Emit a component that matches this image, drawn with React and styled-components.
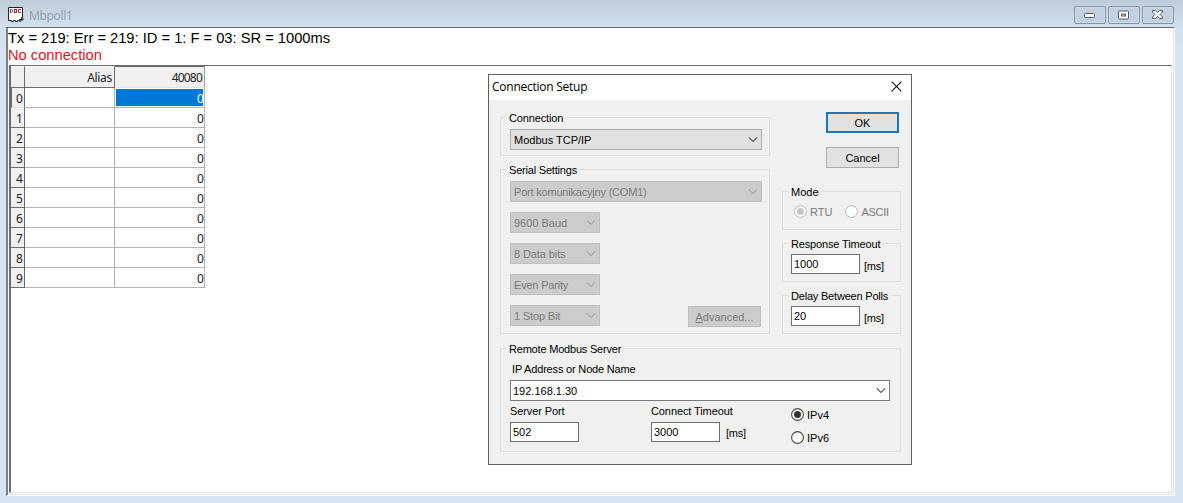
import React from 'react';
import styled, { createGlobalStyle } from 'styled-components';

const GlobalStyle = createGlobalStyle`
    * {
        box-sizing: border-box;
    }

    body {
        margin: 0;
        overflow: hidden;
        background: #d7e4f2;
    }
`;

const Window = styled.div`
    position: relative;
    display: flex;
    flex-direction: column;
    width: 1183px;
    height: 503px;
    padding: 0 8px 7px 6px;
    background: linear-gradient(#bfcddb 0, #d2dfec 27px, #d7e4f2 60px);
    color: #000;
`;

const TitleBar = styled.header`
    display: flex;
    flex: none;
    align-items: flex-start;
    height: 27px;
    padding: 6px 0 0 2px;

    > svg {
        margin-top: 1px;
    }
`;

const WindowTitle = styled.h1`
    flex: 1;
    margin: 2px 0 0 5px;
    font: 12px/16px "Open Sans", sans-serif;
    letter-spacing: -0.3px;
    color: #929ba5;
`;

const WindowButtons = styled.div`
    display: flex;
    gap: 2px;
    margin-right: 1px;
`;

const WindowButton = styled.button`
    display: flex;
    align-items: center;
    justify-content: center;
    width: 32px;
    height: 18px;
    padding: 0;
    border: 1px solid #8593a8;
    border-radius: 2px;
    background: #c3d0df;
    box-shadow: inset 0 0 0 1px #d0dbe8;
`;

const Client = styled.main`
    display: flex;
    flex: 1;
    flex-direction: column;
    padding: 2px 1px 1px 0;
    border: 1px solid;
    border-color: #6b6b6b #fff #fff #808080;
    border-left-width: 2px;
    background: #fff;
    box-shadow: inset -1px -1px #e3e3e3;
`;

const StatusLine = styled.p`
    margin: 0;
    font: 14.7px/17px "Liberation Sans", Arial, sans-serif;
    white-space: nowrap;
    color: ${props => (props.$error ? '#e0141e' : '#000')};
`;

const Sheet = styled.section`
    flex: 1;
    margin: 1px 1px 1px 1px;
    border: 1px solid;
    border-color: #6b6b6b #e3e3e3 #e3e3e3 #6b6b6b;
    border-left-width: 2px;
`;

const Grid = styled.div`
    display: grid;
    grid-template-columns: 14px 90px 90px;
    grid-template-rows: 22px;
    grid-auto-rows: 20px;
    width: 194px;
    font: 12px/20px "Noto Sans", sans-serif;
    letter-spacing: -0.8px;
    text-align: right;
    color: #222;
`;

const HeadCell = styled.div`
    padding: 0 2px 0 0;
    border-right: 1px solid ${props => (props.$active ? '#a0a0a0' : '#696969')};
    border-bottom: 1px solid ${props => (props.$active ? '#e3e3e3' : '#696969')};
    border-top: 1px solid ${props => (props.$active ? '#696969' : '#fff')};
    background: #f0f0f0;
    line-height: 21px;
    letter-spacing: ${props => props.$spacing || -0.8}px;
`;

const RowHead = styled.div`
    padding: 2px 2px 0 0;
    border-right: 1px solid #696969;
    border-bottom: 1px solid ${props => (props.$active ? '#e3e3e3' : '#696969')};
    border-left: ${props => (props.$active ? '1px solid #696969' : '0')};
    background: #f0f0f0;
    line-height: 18px;
`;

const Cell = styled.div`
    padding: 1px;
    border-right: 1px solid #b4b4b4;
    border-bottom: 1px solid #b4b4b4;

    span {
        display: block;
        height: 17px;
        line-height: 19px;
        color: ${props => (props.$selected ? '#fff' : '#222')};
        background: ${props => (props.$selected ? '#0078d7' : 'none')};
    }
`;

const Dialog = styled.div`
    position: absolute;
    top: 74px;
    left: 488px;
    width: 424px;
    height: 391px;
    border: 1px solid #5f5f5f;
    background: #f0f0f0;
    font: 11px/14px "Liberation Sans", Arial, sans-serif;
`;

const DialogBar = styled.div`
    display: flex;
    justify-content: space-between;
    height: 25px;
    padding: 4px 9px 0 3px;
    background: #fff;
    font: 12px/16px "Open Sans", sans-serif;
    letter-spacing: -0.25px;

    svg {
        margin-top: 2px;
    }
`;

const DialogBody = styled.div`
    display: grid;
    grid-template-columns: 270px 119px;
    gap: 14px 12px;
    padding: 17px 10px 0 11px;
`;

const Column = styled.div`
    display: flex;
    flex-direction: column;
    gap: 13px;
`;

const Group = styled.section`
    grid-column: ${props => (props.$wide ? 'span 2' : 'auto')};
    height: ${props => props.$height || 39}px;
    padding: 0 8px;
    border: 1px solid #dcdcdc;
`;

const Text = styled.span`
    display: block;
    height: 13px;
    white-space: nowrap;
    letter-spacing: ${props => props.$spacing || 0}px;
`;

const FieldLabel = styled(Text)`
    line-height: 12px;
`;

const Legend = styled(Text)`
    width: fit-content;
    margin: -7px 0 0 -3px;
    padding: 0 3px;
    background: #f0f0f0;
`;

const Stack = styled.div`
    display: flex;
    flex-direction: column;
    gap: 10px;
    margin: 5px 0 0 1px;
`;

const Line = styled.div`
    display: flex;
    align-items: center;
    gap: ${props => props.$gap || 0}px;
    margin-top: ${props => props.$top || 0}px;
    padding-left: ${props => props.$indent || 0}px;
`;

const SelectBox = styled.div`
    display: flex;
    align-items: center;
    justify-content: space-between;
    width: ${props => props.$width}px;
    height: 21px;
    padding: 0 3px 0 ${props => (props.$editable ? 2 : 3)}px;
    border: 1px solid ${props => (props.$editable ? '#7a7a7a' : props.$disabled ? '#bfbfbf' : '#adadad')};
    background: ${props => (props.$editable ? '#fff' : props.$disabled ? '#ccc' : '#e1e1e1')};
    color: ${props => (props.$disabled ? '#7a7a7a' : '#000')};
`;

const Button = styled.button`
    width: 73px;
    height: 21px;
    padding: 1px 0 0;
    border: ${props => (props.$primary ? '2px solid #1a76bd' : '1px solid #adadad')};
    background: #e1e1e1;
    color: #000;
    font: inherit;

    &:disabled {
        border-color: #bfbfbf;
        background: #ccc;
        color: #7a7a7a;
    }
`;

const Actions = styled.div`
    display: flex;
    flex-direction: column;
    gap: 14px;
    margin: -5px 0 10px 44px;
`;

const SerialFooter = styled(Line)`
    align-items: flex-end;
    justify-content: space-between;
    width: 251px;

    ${Button} {
        margin-bottom: -1px;
    }
`;

const Field = styled.input`
    width: 69px;
    height: 20px;
    padding: 0 0 0 2px;
    border: 1px solid #6e6e6e;
    outline: 0;
    background: #fff;
    color: #000;
    font: inherit;
`;

const Unit = styled(Text)`
    margin-top: ${props => (props.$raised ? 0 : 2)}px;
`;

const Server = styled.div`
    display: grid;
    grid-template-columns: 141px 140px 1fr;
    margin: 4px 0 0 1px;
`;

const RadioLabel = styled.label`
    display: flex;
    align-items: center;
    gap: 3px;
    height: 13px;
    color: ${props => (props.$disabled ? '#7a7a7a' : '#000')};
`;

const Radios = styled.div`
    display: flex;
    flex-direction: column;
    gap: 10px;
    margin-top: 3px;
`;

const Chevron = ({ color = '#555' }) => (
    <svg width="10" height="7" viewBox="0 0 10 7" fill="none" stroke={color} strokeWidth="1.15">
        <path d="M0.8 1.3 5 5.4 9.2 1.3" />
    </svg>
);

const Radio = ({ label, checked, disabled, spacing }) => (
    <RadioLabel $disabled={disabled}>
        <svg width="13" height="13" viewBox="0 0 13 13">
            <circle cx="6.5" cy="6.5" r="5.9" fill="#fff" stroke={disabled ? '#c4c4c4' : '#444'} strokeWidth="1.1" />
            {checked && <circle cx="6.5" cy="6.5" r="3.5" fill={disabled ? '#c4c4c4' : '#333'} />}
        </svg>
        <Text $spacing={spacing}>{label}</Text>
    </RadioLabel>
);

const Select = ({ children, width, disabled, editable, spacing }) => (
    <SelectBox $width={width} $disabled={disabled} $editable={editable}>
        <Text $spacing={spacing}>{children}</Text>
        <Chevron color={disabled ? '#a6a6a6' : '#555'} />
    </SelectBox>
);

const DocIcon = () => (
    <svg width="16" height="16" viewBox="0 0 16 16">
        <path d="M.5.5h14v10h-1v2h-2v1h-2v1h-2v-1h-2v1h-2v-1h-3z" fill="#fff" stroke="#222" />
        <path d="M15 11v2h-2v1h-2" fill="none" stroke="#222" />
        <g fill="none" stroke="#a2262c">
            <path d="M2.500 2.500v3h1l1-1v-1l-1-1z" />
            <rect x="6.500" y="2.500" width="2" height="3" />
            <path d="M13 2.500h-2.500v3H13" />
        </g>
    </svg>
);

const rows = [0, 1, 2, 3, 4, 5, 6, 7, 8, 9];

const serialOptions = [
    { text: '9600 Baud', spacing: 0 },
    { text: '8 Data bits', spacing: -0.1 },
    { text: 'Even Parity', spacing: -0.2 },
];

const App = () => {
    return (
        <Window>
            <GlobalStyle />
            <TitleBar>
                <DocIcon />
                <WindowTitle>Mbpoll1</WindowTitle>
                <WindowButtons>
                    <WindowButton aria-label="Minimize">
                        <svg width="12" height="6" viewBox="0 0 12 6">
                            <rect x=".5" y="1.500" width="10" height="4" rx="1" fill="#fff" stroke="#555b66" />
                        </svg>
                    </WindowButton>
                    <WindowButton aria-label="Maximize">
                        <svg width="12" height="10" viewBox="0 0 12 10">
                            <rect x=".5" y="1" width="10" height="8" rx="1" fill="#fff" stroke="#555b66" />
                            <rect x="3.500" y="4" width="4" height="2" fill="#c3d0df" stroke="#555b66" />
                        </svg>
                    </WindowButton>
                    <WindowButton aria-label="Close">
                        <svg width="12" height="10" viewBox="0 0 12 10">
                            <path
                                d="M.5.5h3L5.500 2.500 7.500.5h3v1.500L8 4.500l2.500 2.500v1.500h-3l-2-2-2 2h-3V7L3 4.500.5 2z"
                                fill="#fff"
                                stroke="#555b66"
                            />
                        </svg>
                    </WindowButton>
                </WindowButtons>
            </TitleBar>
            <Client>
                <StatusLine>Tx = 219: Err = 219: ID = 1: F = 03: SR = 1000ms</StatusLine>
                <StatusLine $error>No connection</StatusLine>
                <Sheet>
                    <Grid>
                        <HeadCell />
                        <HeadCell $spacing={-0.3}>Alias</HeadCell>
                        <HeadCell $active>40080</HeadCell>
                        {rows.map(row => (
                            <React.Fragment key={row}>
                                <RowHead $active={row === 0}>{row}</RowHead>
                                <Cell />
                                <Cell $selected={row === 0}>
                                    <span>0</span>
                                </Cell>
                            </React.Fragment>
                        ))}
                    </Grid>
                </Sheet>
            </Client>
            <Dialog>
                <DialogBar>
                    Connection Setup
                    <svg width="11" height="11" viewBox="0 0 11 11" stroke="#111" strokeWidth="1.100">
                        <path d="M.6.600 10.400 10.400M10.400.600.600 10.400" />
                    </svg>
                </DialogBar>
                <DialogBody>
                    <Column>
                        <Group>
                            <Legend $spacing={-0.15}>Connection</Legend>
                            <Stack>
                                <Select width={252}>Modbus TCP/IP</Select>
                            </Stack>
                        </Group>
                        <Group $height={165}>
                            <Legend $spacing={-0.2}>Serial Settings</Legend>
                            <Stack>
                                <Select width={252} spacing={-0.2} disabled>Port komunikacyjny (COM1)</Select>
                                {serialOptions.map(({ text, spacing }) => (
                                    <Select key={text} width={90} spacing={spacing} disabled>{text}</Select>
                                ))}
                                <SerialFooter>
                                    <Select width={90} spacing={-0.15} disabled>1 Stop Bit</Select>
                                    <Button disabled><u>A</u>dvanced...</Button>
                                </SerialFooter>
                            </Stack>
                        </Group>
                    </Column>
                    <Column>
                        <Actions>
                            <Button $primary>OK</Button>
                            <Button>Cancel</Button>
                        </Actions>
                        <Group>
                            <Legend>Mode</Legend>
                            <Line $top={7} $gap={13} $indent={3}>
                                <Radio label="RTU" checked disabled />
                                <Radio label="ASCII" spacing={-0.3} disabled />
                            </Line>
                        </Group>
                        <Group>
                            <Legend $spacing={-0.15}>Response Timeout</Legend>
                            <Line $top={4} $gap={4}>
                                <Field defaultValue="1000" />
                                <Unit $spacing={-0.25}>[ms]</Unit>
                            </Line>
                        </Group>
                        <Group>
                            <Legend $spacing={-0.2}>Delay Between Polls</Legend>
                            <Line $top={4} $gap={4}>
                                <Field defaultValue="20" />
                                <Unit $spacing={-0.25}>[ms]</Unit>
                            </Line>
                        </Group>
                    </Column>
                    <Group $wide $height={104}>
                        <Legend $spacing={-0.2}>Remote Modbus Server</Legend>
                        <Line $top={8} $indent={3}>
                            <FieldLabel $spacing={-0.18}>IP Address or Node Name</FieldLabel>
                        </Line>
                        <Line $top={4} $indent={1}>
                            <Select width={380} editable>192.168.1.30</Select>
                        </Line>
                        <Server>
                            <div>
                                <FieldLabel $spacing={-0.1}>Server Port</FieldLabel>
                                <Line $top={4}>
                                    <Field defaultValue="502" />
                                </Line>
                            </div>
                            <div>
                                <FieldLabel $spacing={-0.1}>Connect Timeout</FieldLabel>
                                <Line $top={4} $gap={6}>
                                    <Field defaultValue="3000" />
                                    <Unit $spacing={-0.25} $raised>[ms]</Unit>
                                </Line>
                            </div>
                            <Radios>
                                <Radio label="IPv4" checked />
                                <Radio label="IPv6" />
                            </Radios>
                        </Server>
                    </Group>
                </DialogBody>
            </Dialog>
        </Window>
    );
};

export default App;
